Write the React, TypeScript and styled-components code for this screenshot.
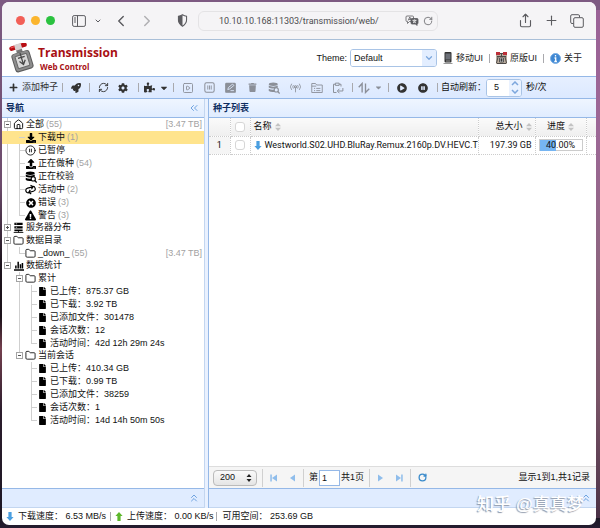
import React from 'react';
import styled, { createGlobalStyle, css } from 'styled-components';
import {
  FaPlus, FaRocket, FaCog, FaPuzzlePiece, FaCaretDown, FaTrash, FaPlayCircle, FaPauseCircle,
  FaDownload, FaUpload, FaTimesCircle, FaExclamationTriangle, FaFile,
} from 'react-icons/fa';
import {
  ChevronDown, ChevronLeft, ChevronRight, ChevronsLeft, ChevronsUp, Plus, Share, RotateCw,
  RefreshCw, Folder, House, CirclePause, SquarePlay,
} from 'lucide-react';

const line = '#95b8e7';
const navy = '#0e2d5f';

const GlobalStyle = createGlobalStyle`
  * { box-sizing: border-box; }
  body {
    margin: 0;
    font: 9px/13px "Liberation Sans", "Noto Sans CJK SC", sans-serif;
    color: #111;
  }
  button, input, select { font: inherit; color: inherit; margin: 0; }
  ul { list-style: none; margin: 0; padding: 0; }
  svg { display: block; flex: none; }
`;

const Desktop = styled.div`
  position: relative;
  display: flex;
  min-height: 100vh;
  padding: 2px 4px 3px 2px;
  background:
    linear-gradient(#7d5a82, #7d5a82) top / 100% 10px no-repeat,
    linear-gradient(#1b1724, #251c30) bottom / 100% 10px no-repeat,
    linear-gradient(#7d5a82 0, #6d4c6c 35%, #1c131c 50%, #1a1119 60%, #74404f 66%, #2b1c2c 78%, #1b1724 100%) left / 50% 100% no-repeat,
    linear-gradient(#9a6196 0, #9d6896 25%, #8d6580 50%, #7a5568 75%, #462e43 100%) right / 50% 100% no-repeat;
`;

const Window = styled.div`
  flex: 1;
  min-width: 0;
  display: flex;
  flex-direction: column;
  background: #fff;
  border-radius: 7px;
  overflow: hidden;
`;

const TitleBar = styled.div`
  display: flex;
  align-items: center;
  height: 38px;
  padding: 0 12px 0 14px;
  background: #f5f4f6;
  border-bottom: 1px solid #a9bfd8;
  color: #5c5c60;
`;

const Lights = styled.div`
  display: flex;
  gap: 6px;
  margin-right: 17px;
`;

const Light = styled.button<{ $color: string }>`
  width: 9px;
  height: 9px;
  padding: 0;
  border: 0;
  border-radius: 50%;
  background: ${p => p.$color};
`;

const PlainButton = styled.button<{ $width: number; $after?: number; $dim?: boolean }>`
  display: flex;
  align-items: center;
  justify-content: center;
  width: ${p => p.$width}px;
  margin-right: ${p => p.$after ?? 0}px;
  padding: 0;
  border: 0;
  background: none;
  opacity: ${p => (p.$dim ? 0.45 : 1)};
`;

const AddressBar = styled.div`
  flex: 1;
  display: flex;
  align-items: center;
  gap: 4px;
  height: 20px;
  margin-right: 80px;
  padding: 0 4px 0 20px;
  border: 1px solid #e4e3e5;
  border-radius: 6px;
`;

const AddressInput = styled.input`
  flex: 1;
  min-width: 0;
  border: 0;
  padding: 0;
  background: none;
  font: 9px/14px Roboto, "Liberation Sans", sans-serif;
  color: #4c4c4f;
  outline: 0;
`;

const Header = styled.header`
  display: flex;
  align-items: center;
  height: 36px;
  padding: 0 14px 0 6px;
`;

const Brand = styled.div`
  display: flex;
  flex-direction: column;
  flex: 1;
  padding-left: 4px;
  font-family: "Open Sans", sans-serif;
  font-weight: 700;
  color: #a80f14;
`;

const BrandName = styled.span`
  font-size: 12px;
  line-height: 16px;
`;

const BrandSub = styled.span`
  padding-left: 2px;
  font-size: 8px;
  line-height: 11px;
`;

const ThemeLabel = styled.label`
  display: flex;
  align-items: center;
  gap: 3px;
  margin-right: 6px;
`;

const SelectBox = styled.span`
  display: flex;
  align-items: center;
  width: 87px;
  height: 18px;
  border: 1px solid #a9c4e6;
  border-radius: 3px;
  overflow: hidden;
`;

const ThemeSelect = styled.select`
  flex: 1;
  min-width: 0;
  height: 100%;
  padding: 0 3px;
  border: 0;
  appearance: none;
  background: #fff;
`;

const SelectArrow = styled.span`
  display: flex;
  align-items: center;
  justify-content: center;
  width: 14px;
  height: 100%;
  background: #e3eeff;
  color: #7da7dd;
`;

const HeaderLink = styled.a`
  display: flex;
  align-items: center;
  gap: 3px;
  color: #222;
  text-decoration: none;
`;

const Divider = styled.span<{ $gap?: number; $height?: number; $light?: boolean }>`
  flex: none;
  width: 1px;
  height: ${p => p.$height ?? 9}px;
  margin: 0 ${p => p.$gap ?? 6}px;
  background: ${p => (p.$light ? '#d0d0d0' : '#a9a9ad')};
`;

const Toolbar = styled.div`
  display: flex;
  align-items: center;
  height: 23px;
  padding-left: 7px;
  background: linear-gradient(#e6efff, #dce9ff);
  border-top: 1px solid ${line};
  border-bottom: 1px solid ${line};
  white-space: nowrap;
`;

const ToolButton = styled.button<{ $width?: number }>`
  display: flex;
  align-items: center;
  justify-content: center;
  gap: 4px;
  width: ${p => (p.$width ? `${p.$width}px` : 'auto')};
  height: 20px;
  padding: 0;
  border: 0;
  background: none;
  color: #333;
  &:disabled { color: #8b8f98; }
`;

const TorrentActions = styled.div`
  display: grid;
  flex: 0 0 172px;
  grid-template-columns: repeat(8, 1fr);
  justify-items: center;
`;

const RefreshLabel = styled.label`
  display: flex;
  align-items: center;
`;

const Spinner = styled.span`
  display: flex;
  width: 36px;
  height: 18px;
  margin-right: 4px;
  border: 1px solid #a9c4e6;
  border-radius: 3px;
  background: #fff;
  overflow: hidden;
`;

const SpinnerInput = styled.input`
  flex: 1;
  min-width: 0;
  padding: 0 0 0 7px;
  border: 0;
`;

const SpinnerArrows = styled.span`
  display: flex;
  flex-direction: column;
  justify-content: space-around;
  align-items: center;
  width: 12px;
  background: #eaf2ff;
  color: #7da7dd;
`;

const Body = styled.div`
  flex: 1;
  display: flex;
  min-height: 0;
  background: #e9f1ff;
`;

const panel = css`
  display: flex;
  flex-direction: column;
  background: #fff;
`;

const Sidebar = styled.nav`
  ${panel}
  flex: 0 0 203px;
  border-right: 1px solid #c3d6f0;
`;

const Main = styled.main`
  ${panel}
  flex: 1;
  min-width: 0;
  margin-left: 3px;
  border-left: 1px solid ${line};
`;

const PanelHeader = styled.div`
  display: flex;
  align-items: center;
  justify-content: space-between;
  height: 19px;
  padding: 0 5px 0 4px;
  background: linear-gradient(#eff5ff, #e0ecff);
  border-bottom: 1px solid ${line};
  font-weight: 700;
  color: ${navy};
`;

const FoldBar = styled.div`
  display: flex;
  align-items: center;
  justify-content: flex-end;
  height: 20px;
  padding-right: 5px;
  background: #e0ecff;
  border-top: 1px solid ${line};
  border-bottom: 1px solid #c3d6f0;
  color: #6fa3e0;
`;

const Tree = styled.ul`
  flex: 1;
  ul { margin-bottom: -1px; }
`;

const dots = '#cfcfcf';

const TreeItem = styled.li<{ $level: number }>`
  background: linear-gradient(${dots}, ${dots}) ${p => 5 + p.$level * 12}px 0 / 1px 100% no-repeat;
  &:last-child { background-size: 1px 7px; }
`;

const TreeRow = styled.div<{ $level: number; $selected?: boolean }>`
  display: flex;
  align-items: center;
  height: 13px;
  padding: 0 2px 0 ${p => 2 + p.$level * 12}px;
  background: ${p => (p.$selected ? '#ffe48d' : 'transparent')};
  white-space: nowrap;
`;

const Elbow = styled.span`
  flex: none;
  width: 6px;
  height: 1px;
  margin: 0 0 0 3px;
  background: ${dots};
`;

const Expander = styled.button`
  flex: none;
  display: flex;
  width: 7px;
  height: 7px;
  margin-right: 2px;
  padding: 0;
  border: 1px solid #a4a4a4;
  background: #fff;
  color: #555;
`;

const TreeIcon = styled.span`
  display: flex;
  justify-content: center;
  flex: none;
  width: 11px;
  margin-right: 2px;
  color: #000;
`;

const Muted = styled.span<{ $end?: boolean }>`
  margin-left: ${p => (p.$end ? 'auto' : '2px')};
  color: #a2a2a2;
`;

const GridArea = styled.div`
  flex: 1;
  min-height: 0;
`;

const Table = styled.table`
  width: 100%;
  table-layout: fixed;
  border-collapse: collapse;
  font-family: Roboto, "Noto Sans CJK SC", sans-serif;
  th, td {
    height: 18px;
    padding: 0 3px;
    border-right: 1px dotted #ccc;
    border-bottom: 1px dotted #ccc;
    font-weight: 400;
    text-align: left;
    white-space: nowrap;
    overflow: hidden;
  }
  thead th { background: linear-gradient(#fafafa, #efefef); }
  tbody td:first-child { background: #f5f5f5; text-align: center; }
  th:last-child, td:last-child { border-right: 0; }
`;

const Col = styled.col<{ $width?: number }>`
  width: ${p => (p.$width ? `${p.$width}px` : 'auto')};
`;

const CellLine = styled.span<{ $end?: boolean; $center?: boolean }>`
  display: flex;
  align-items: center;
  justify-content: ${p => (p.$end ? 'flex-end' : p.$center ? 'center' : 'flex-start')};
  gap: 3px;
`;

const CheckBox = styled.input`
  display: block;
  appearance: none;
  width: 10px;
  height: 10px;
  margin: 0 auto;
  border: 1px solid #d6d6d6;
  border-radius: 3px;
  background: #fff;
`;

const Progress = styled.div`
  display: grid;
  height: 12px;
  border: 1px solid #ccc;
  > * { grid-area: 1 / 1; }
`;

const ProgressFill = styled.span`
  background: #76b5f2;
`;

const ProgressText = styled.span`
  text-align: center;
  line-height: 11px;
`;

const Pager = styled.div`
  display: flex;
  align-items: center;
  height: 22px;
  padding: 0 6px 0 4px;
  background: #f5f5f5;
  border-top: 1px solid #ddd;
  white-space: nowrap;
`;

const PageSize = styled.span`
  display: flex;
  align-items: center;
  width: 44px;
  height: 16px;
  padding-right: 4px;
  border: 1px solid #bbb;
  border-radius: 4px;
  background: linear-gradient(#fafafa, #e5e5e5);
`;

const PageSizeSelect = styled.select`
  flex: 1;
  min-width: 0;
  padding: 0 0 0 6px;
  border: 0;
  appearance: none;
  background: none;
`;

const PageLabel = styled.label`
  display: flex;
  align-items: center;
`;

const PageInput = styled.input`
  width: 21px;
  height: 16px;
  margin: 0 1px;
  padding: 0 2px;
  border: 1px solid ${line};
`;

const PagerInfo = styled.span`
  margin-left: auto;
`;

const StatusBar = styled.footer`
  display: flex;
  align-items: center;
  height: 17px;
  padding: 0 4px;
  white-space: nowrap;
`;

const StatusText = styled.span`
  margin-left: 4px;
  white-space: pre;
`;

const Watermark = styled.div`
  position: absolute;
  right: 16px;
  bottom: 11px;
  font: 500 17px/24px "Liberation Sans", "Noto Sans CJK SC", sans-serif;
  color: #fff;
  text-shadow: -1px 1px 1px #8e98a9;
  pointer-events: none;
`;

type IconProps = { size?: number; children: React.ReactNode };
const Glyph = ({ size = 11, children }: IconProps) => (
  <svg width={size} height={size} viewBox="0 0 16 16" fill="none" stroke="currentColor" strokeWidth="1.5" aria-hidden="true">
    {children}
  </svg>
);

const Logo = () => (
  <svg width="26" height="30" viewBox="0 0 26 30" aria-hidden="true">
    <g transform="rotate(-17 13 15)">
      <rect x="10.5" y="4" width="6" height="7" fill="#777" />
      <rect x="4" y="9" width="19" height="19" rx="3" fill="#5c5c5c" />
      <rect x="5" y="9.5" width="17" height="17.5" rx="2.5" fill="#8d8d8d" />
      <rect x="7.5" y="12" width="12" height="12.5" rx="1" fill="#d9d9d9" stroke="#686868" />
      <path d="M13.5 10v11M10.5 18l3 4 3-4M10 14.5h7" stroke="#484848" strokeWidth="1.3" fill="none" />
      <rect x="4.5" y="1" width="18" height="4.5" rx="2.2" fill="#b80d12" />
      <rect x="10" y=".5" width="7" height="6" rx="1" fill="#d8d0d0" />
      <rect x="6" y="1.5" width="4" height="1.5" rx=".7" fill="#ec5357" />
    </g>
  </svg>
);

const SidebarGlyph = () => (
  <svg width="14" height="12" viewBox="0 0 14 12" fill="none" stroke="currentColor" aria-hidden="true">
    <rect x=".6" y=".6" width="12.8" height="10.8" rx="1.5" />
    <path d="M5.5 .5v11M2 3h2M2 5h2M2 7h2" />
  </svg>
);

const ShieldGlyph = () => (
  <Glyph size={13}>
    <path d="M8 1c2 1.300 3.500 1.700 5 1.800v4.700c0 3.500-2 5.700-5 7.500-3-1.800-5-4-5-7.500V2.800C4.500 2.700 6 2.300 8 1z" strokeWidth="1.300" />
    <path d="M8 1v14c-3-1.800-5-4-5-7.500V2.800C4.500 2.700 6 2.300 8 1z" fill="currentColor" stroke="none" />
  </Glyph>
);

const TranslateGlyph = () => (
  <svg width="14" height="11" viewBox="0 0 14 11" fill="none" stroke="currentColor" strokeWidth=".8" aria-hidden="true">
    <path d="M2 1h5.500a1 1 0 0 1 1 1v4.500h-4L2.500 8.500v-2H2a1 1 0 0 1-1-1V2a1 1 0 0 1 1-1zM3.200 5.500 4.800 2l1.500 3.500M3.800 4.400h2" />
    <path d="M7 3.500h5a1 1 0 0 1 1 1V8a1 1 0 0 1-1 1v1.500L10.500 9H7a1 1 0 0 1-1-1V4.500a1 1 0 0 1 1-1z" fill="currentColor" />
    <path d="M7.500 5.300h4M9.500 4.500v.8M8 7.800c1.500-.5 2.300-1.300 2.600-2.500M8.300 5.500c.5 1.300 1.500 2 2.700 2.300" stroke="#fff" />
  </svg>
);

const PhoneGlyph = () => (
  <svg width="10" height="12" viewBox="0 0 10 12" aria-hidden="true">
    <rect x="1.500" width="7" height="10.500" rx="1" fill="#333" />
    <rect x="2.500" y="1.500" width="5" height="6" fill="#6c7078" />
    <path d="M3 9h4M.5 11.500h9" stroke="#999" />
  </svg>
);

const OriginalGlyph = () => (
  <svg width="11" height="12" viewBox="0 0 11 12" aria-hidden="true">
    <rect y="2" width="11" height="10" fill="#b9ac9d" />
    <path d="M0 0h4v3H0zM7 0h4v3H7z" fill="#bc2f38" />
    <path d="M4 1.500h3M1 4.500h9M5.500 2v3M2 5l-1.500 6M9 5l1.500 6M1 11.500h9" stroke="#4c4948" />
    <path d="M3.500 6h4v4h-4z" fill="#eee" stroke="#555" />
    <path d="M4 8h3M5.500 6.500v3" stroke="#333" />
  </svg>
);

const InfoGlyph = () => (
  <svg width="11" height="11" viewBox="0 0 11 11" aria-hidden="true">
    <circle cx="5.500" cy="5.500" r="5" fill="#3e87d2" stroke="#79aee5" />
    <path d="M5.500 2v1.500M4.500 5h1.200v3.500M4.300 8.500h2.600" stroke="#fff" strokeWidth="1.300" fill="none" />
  </svg>
);

const PauseBoxGlyph = () => (
  <Glyph><rect x="1.200" y="1.200" width="13.600" height="13.600" rx="2.500" /><path d="M5.500 5v6M8 5v6M10.500 5v6" strokeWidth="1.300" /></Glyph>
);
const EditGlyph = () => (
  <Glyph><rect x="1" y="2" width="14" height="13" rx="1" fill="currentColor" /><path d="M4 11l1-3 6-5 2 2-6 5zM8 12.500h5" stroke="#e2edff" strokeWidth="1.200" /></Glyph>
);
const DataSearchGlyph = ({ halo = '#fff' }: { halo?: string }) => (
  <Glyph size={12}>
    <g fill="currentColor" stroke="none">
      <ellipse cx="7" cy="3" rx="6" ry="2.300" />
      <path d="M1 4.700c3 2 9 2 12 0v2.500c-3 2-9 2-12 0zM1 9c2 1.300 5 1.700 8 1.200V13c-3 .6-6 .2-8-1z" />
    </g>
    <circle cx="11" cy="10.500" r="2.800" fill={halo} />
    <path d="M13 12.500l2.500 2.800" strokeWidth="1.800" />
  </Glyph>
);
const AntennaGlyph = () => (
  <Glyph>
    <circle cx="8" cy="7" r="1.500" />
    <path d="M8 8.500V15M5 4.500a4 4 0 0 0 0 5M11 4.500a4 4 0 0 1 0 5M2.500 2.500a7 7 0 0 0 0 9M13.500 2.500a7 7 0 0 1 0 9" strokeWidth="1.200" />
  </Glyph>
);
const FolderListGlyph = () => (
  <Glyph size={12}><path d="M1 14V2h5l1.500 2H15v10zM1 5.500h6M4 8.500h1.500M7 8.500h5.500M4 11.500h1.500M7 11.500h5.500" strokeWidth="1.200" /></Glyph>
);
const ClipboardGlyph = () => (
  <Glyph size={12}><path d="M6 14H2V3h2.500M9.500 3H12v3M4.500 1.500h5v3h-5zM14.500 8v4H8M10 9l-3 3 3 3" strokeWidth="1.300" /></Glyph>
);
const SortGlyph = () => (
  <Glyph size={12}><path d="M1 7l4.500-5v12M10 2v12l5-5" strokeWidth="1.800" /></Glyph>
);
const ServerGlyph = () => (
  <Glyph size={11}>
    <path d="M2 1h12v3.500H2zM2 6h12v3.500H2zM2 11h12v2.500H2z" fill="currentColor" stroke="none" />
    <path d="M8 13v2M1 15.300h14" strokeWidth="1.200" />
    <path d="M4 2.700h2M4 7.700h2" stroke="#fff" strokeWidth="1" />
  </Glyph>
);
const ActiveGlyph = () => (
  <Glyph size={11}>
    <path d="M4.500 12A3.500 3.500 0 0 1 4.500 5H12M9.500 2l3 3-3 3M11.500 4.500a3.500 3.500 0 0 1 0 7H5M7.500 8.500l-3 3 3 3" strokeWidth="1.700" transform="rotate(-14 8 8)" />
  </Glyph>
);
const SortMark = () => (
  <svg width="6" height="8" viewBox="0 0 6 8" fill="#c3c3c3" aria-hidden="true"><path d="M3 0l3 3.300H0zM3 8l3-3.300H0z" /></svg>
);
const ArrowGlyph = ({ color, up }: { color: string; up?: boolean }) => (
  <svg width="8" height="9" viewBox="0 0 8 10" fill={color} aria-hidden="true">
    <path d={up ? 'M4 0l4 4.500H5.800V10H2.200V4.500H0z' : 'M4 10l4-4.500H5.800V0H2.200v5.500H0z'} />
  </svg>
);
const StepGlyph = ({ back, bar }: { back?: boolean; bar?: boolean }) => (
  <svg width="8" height="8" viewBox="0 0 8 8" fill="#8fbdeb" aria-hidden="true">
    <g transform={back ? 'translate(8 0) scale(-1 1)' : undefined}>
      <path d="M1 .5 6 4 1 7.500z" />
      {bar && <path d="M6.200 .5h1.500v7H6.200z" />}
    </g>
  </svg>
);
const UpDownGlyph = () => (
  <svg width="6" height="8" viewBox="0 0 6 8" fill="#222" aria-hidden="true"><path d="M3 0l2.500 3h-5zM3 8l2.500-3h-5z" /></svg>
);

type Node = {
  label: string; icon: React.ReactNode; count?: string; size?: string; value?: string;
  selected?: boolean; closed?: boolean; children?: Node[];
};

const doc = <FaFile size={9} />;
const folder = <Folder size={11} strokeWidth={1.8} />;
const stats = (up: string, down: string, files: string, sessions: string, time: string): Node[] => [
  { label: '已上传：', value: up, icon: doc },
  { label: '已下载：', value: down, icon: doc },
  { label: '已添加文件：', value: files, icon: doc },
  { label: '会话次数：', value: sessions, icon: doc },
  { label: '活动时间：', value: time, icon: doc },
];

const nodes: Node[] = [
  {
    label: '全部', count: '(55)', size: '[3.47 TB]', icon: <House size={11} strokeWidth={2} />,
    children: [
      { label: '下载中', count: '(1)', selected: true, icon: <FaDownload size={10} /> },
      { label: '已暂停', icon: <CirclePause size={11} strokeWidth={1.8} /> },
      { label: '正在做种', count: '(54)', icon: <FaUpload size={10} /> },
      { label: '正在校验', icon: <DataSearchGlyph /> },
      { label: '活动中', count: '(2)', icon: <ActiveGlyph /> },
      { label: '错误', count: '(3)', icon: <FaTimesCircle size={10} /> },
      { label: '警告', count: '(3)', icon: <FaExclamationTriangle size={11} /> },
    ],
  },
  { label: '服务器分布', closed: true, icon: <ServerGlyph />, children: [] },
  { label: '数据目录', icon: folder, children: [{ label: '_down_', count: '(55)', size: '[3.47 TB]', icon: folder }] },
  {
    label: '数据统计', icon: <Glyph size={10}><path d="M3 12V7M6.700 12V1M10.300 12V5M13.500 12V3M0 14.500h16" strokeWidth="2.400" /></Glyph>,
    children: [
      { label: '累计', icon: folder, children: stats('875.37 GB', '3.92 TB', '301478', '12', '42d 12h 29m 24s') },
      { label: '当前会话', icon: folder, children: stats('410.34 GB', '0.99 TB', '38259', '1', '14d 14h 50m 50s') },
    ],
  },
];

const Branch = ({ node, level }: { node: Node; level: number }) => (
  <TreeItem $level={level}>
    <TreeRow $level={level} $selected={node.selected}>
      {node.children ? (
        <Expander aria-label={node.label}>
          <svg width="5" height="5" viewBox="0 0 5 5" stroke="currentColor" aria-hidden="true">
            <path d={node.closed ? 'M1 2.500h3M2.500 1v3' : 'M1 2.500h3'} />
          </svg>
        </Expander>
      ) : <Elbow />}
      <TreeIcon>{node.icon}</TreeIcon>
      <span>{node.label}</span>
      {node.value && <span>{node.value}</span>}
      {node.count && <Muted>{node.count}</Muted>}
      {node.size && <Muted $end>{node.size}</Muted>}
    </TreeRow>
    {node.children && node.children.length > 0 && (
      <ul>{node.children.map(child => <Branch key={child.label} node={child} level={level + 1} />)}</ul>
    )}
  </TreeItem>
);

const torrents = [
  { name: 'Westworld.S02.UHD.BluRay.Remux.2160p.DV.HEVC.T', size: '197.39 GB', progress: 40 },
];

const actions: [string, React.ReactNode][] = [
  ['开始', <SquarePlay size={12} strokeWidth={1.8} />],
  ['暂停', <PauseBoxGlyph />],
  ['编辑', <EditGlyph />],
  ['删除', <FaTrash size={9} />],
  ['校验', <DataSearchGlyph halo="#e2edff" />],
  ['获取更多', <AntennaGlyph />],
  ['变更目录', <FolderListGlyph />],
  ['复制', <ClipboardGlyph />],
];

export default function App() {
  return (
    <Desktop>
      <GlobalStyle />
      <Window>
        <TitleBar>
          <Lights>
            <Light $color="#f25f57" aria-label="Close" />
            <Light $color="#fbb52e" aria-label="Minimize" />
            <Light $color="#2bc240" aria-label="Zoom" />
          </Lights>
          <PlainButton $width={14} $after={8} aria-label="Sidebar"><SidebarGlyph /></PlainButton>
          <PlainButton $width={8} $after={12} aria-label="Tab groups"><ChevronDown size={8} strokeWidth={3} /></PlainButton>
          <PlainButton $width={14} $after={12} aria-label="Back"><ChevronLeft size={18} strokeWidth={1.9} /></PlainButton>
          <PlainButton $width={14} $after={22} $dim aria-label="Forward"><ChevronRight size={18} strokeWidth={1.9} /></PlainButton>
          <PlainButton $width={12} $after={10} aria-label="Privacy"><ShieldGlyph /></PlainButton>
          <AddressBar>
            <AddressInput aria-label="Address" defaultValue="10.10.10.168:11303/transmission/web/" />
            <PlainButton $width={14} aria-label="Translate"><TranslateGlyph /></PlainButton>
            <PlainButton $width={10} aria-label="Reload"><RotateCw size={10} strokeWidth={1.8} /></PlainButton>
          </AddressBar>
          <PlainButton $width={14} $after={12} aria-label="Share"><Share size={15} strokeWidth={1.8} /></PlainButton>
          <PlainButton $width={14} $after={12} aria-label="New tab"><Plus size={15} strokeWidth={1.8} /></PlainButton>
          <PlainButton $width={14} aria-label="Tabs">
            <svg width="14" height="14" viewBox="0 0 14 14" fill="none" stroke="currentColor" aria-hidden="true">
              <path d="M3.500 9.500H2A1.300 1.300 0 0 1 .7 8.200V2A1.300 1.300 0 0 1 2 .7h6.200A1.300 1.300 0 0 1 9.500 2v1.500" />
              <rect x="3.700" y="3.700" width="9.600" height="9.600" rx="1.300" />
            </svg>
          </PlainButton>
        </TitleBar>

        <Header>
          <Logo />
          <Brand>
            <BrandName>Transmission</BrandName>
            <BrandSub>Web Control</BrandSub>
          </Brand>
          <ThemeLabel>
            Theme:
            <SelectBox>
              <ThemeSelect defaultValue="Default"><option>Default</option></ThemeSelect>
              <SelectArrow><ChevronDown size={10} strokeWidth={3} /></SelectArrow>
            </SelectBox>
          </ThemeLabel>
          <HeaderLink href="#mobile"><PhoneGlyph />移动UI</HeaderLink>
          <Divider />
          <HeaderLink href="#original"><OriginalGlyph />原版UI</HeaderLink>
          <Divider />
          <HeaderLink href="#about"><InfoGlyph />关于</HeaderLink>
        </Header>

        <Toolbar>
          <ToolButton><FaPlus size={9} />添加种子</ToolButton>
          <Divider $gap={4} />
          <ToolButton $width={18} aria-label="恢复"><FaRocket size={10} /></ToolButton>
          <Divider $gap={4} />
          <ToolButton $width={18} aria-label="刷新"><RefreshCw size={11} strokeWidth={2} /></ToolButton>
          <ToolButton $width={22} aria-label="设置"><FaCog size={10} /></ToolButton>
          <Divider $gap={4} />
          <ToolButton $width={27} aria-label="插件"><FaPuzzlePiece size={11} /><FaCaretDown size={10} /></ToolButton>
          <Divider $gap={3} />
          <TorrentActions>
            {actions.map(([label, icon]) => <ToolButton key={label} disabled aria-label={label}>{icon}</ToolButton>)}
          </TorrentActions>
          <Divider $gap={3} />
          <ToolButton $width={29} disabled aria-label="队列"><SortGlyph /><FaCaretDown size={9} /></ToolButton>
          <Divider $gap={3} />
          <ToolButton $width={20} aria-label="全部开始"><FaPlayCircle size={10} /></ToolButton>
          <ToolButton $width={22} aria-label="全部暂停"><FaPauseCircle size={10} /></ToolButton>
          <Divider $gap={3} />
          <RefreshLabel>
            自动刷新：
            <Spinner>
              <SpinnerInput defaultValue="5" />
              <SpinnerArrows>
                <svg width="8" height="5" viewBox="0 0 8 5" fill="none" stroke="currentColor" strokeWidth="1.5"><path d="M1 4l3-3 3 3" /></svg>
                <svg width="8" height="5" viewBox="0 0 8 5" fill="none" stroke="currentColor" strokeWidth="1.5"><path d="M1 1l3 3 3-3" /></svg>
              </SpinnerArrows>
            </Spinner>
            秒/次
          </RefreshLabel>
        </Toolbar>

        <Body>
          <Sidebar>
            <PanelHeader>
              导航
              <PlainButton $width={10} aria-label="折叠"><ChevronsLeft size={12} strokeWidth={2} color="#6fa3e0" /></PlainButton>
            </PanelHeader>
            <Tree>{nodes.map(node => <Branch key={node.label} node={node} level={0} />)}</Tree>
            <FoldBar><PlainButton $width={10} aria-label="展开"><ChevronsUp size={12} strokeWidth={2} color="#6fa3e0" /></PlainButton></FoldBar>
          </Sidebar>

          <Main>
            <PanelHeader>种子列表</PanelHeader>
            <GridArea>
              <Table>
                <colgroup>
                  <Col $width={21} /><Col $width={20} /><Col /><Col $width={57} /><Col $width={51} /><Col $width={10} />
                </colgroup>
                <thead>
                  <tr>
                    <th />
                    <th><CheckBox type="checkbox" aria-label="全选" /></th>
                    <th><CellLine>名称<SortMark /></CellLine></th>
                    <th><CellLine $end>总大小<SortMark /></CellLine></th>
                    <th><CellLine $center>进度<SortMark /></CellLine></th>
                    <th />
                  </tr>
                </thead>
                <tbody>
                  {torrents.map((t, i) => (
                    <tr key={t.name}>
                      <td>{i + 1}</td>
                      <td><CheckBox type="checkbox" aria-label={t.name} /></td>
                      <td><CellLine><ArrowGlyph color="#4b9fe0" />{t.name}</CellLine></td>
                      <td><CellLine $end>{t.size}</CellLine></td>
                      <td>
                        <Progress role="progressbar" aria-valuenow={t.progress}>
                          <ProgressFill style={{ width: `${t.progress}%` }} />
                          <ProgressText>{t.progress.toFixed(2)}%</ProgressText>
                        </Progress>
                      </td>
                      <td />
                    </tr>
                  ))}
                </tbody>
              </Table>
            </GridArea>
            <Pager>
              <PageSize>
                <PageSizeSelect aria-label="每页" defaultValue="200"><option>200</option></PageSizeSelect>
                <UpDownGlyph />
              </PageSize>
              <Divider $light $gap={5} $height={18} />
              <PlainButton $width={12} $after={6} aria-label="首页"><StepGlyph back bar /></PlainButton>
              <PlainButton $width={12} aria-label="上一页"><StepGlyph back /></PlainButton>
              <Divider $light $gap={5} $height={18} />
              <PageLabel>第<PageInput defaultValue="1" />共1页</PageLabel>
              <Divider $light $gap={5} $height={18} />
              <PlainButton $width={12} $after={6} aria-label="下一页"><StepGlyph /></PlainButton>
              <PlainButton $width={12} aria-label="末页"><StepGlyph bar /></PlainButton>
              <Divider $light $gap={5} $height={18} />
              <PlainButton $width={12} aria-label="刷新列表"><RotateCw size={9} strokeWidth={3.5} color="#3a8bcb" /></PlainButton>
              <PagerInfo>显示1到1,共1记录</PagerInfo>
            </Pager>
            <FoldBar><PlainButton $width={10} aria-label="展开详情"><ChevronsUp size={12} strokeWidth={2} color="#6fa3e0" /></PlainButton></FoldBar>
          </Main>
        </Body>

        <StatusBar>
          <ArrowGlyph color="#4b9fe0" />
          <StatusText>下载速度： 6.53 MB/s</StatusText>
          <Divider $gap={4} />
          <ArrowGlyph color="#5db82c" up />
          <StatusText>上传速度： 0.00 KB/s</StatusText>
          <Divider $gap={2} />
          <StatusText>可用空间： 253.69 GB</StatusText>
        </StatusBar>
      </Window>
      <Watermark>知乎 @真真梦</Watermark>
    </Desktop>
  );
}
